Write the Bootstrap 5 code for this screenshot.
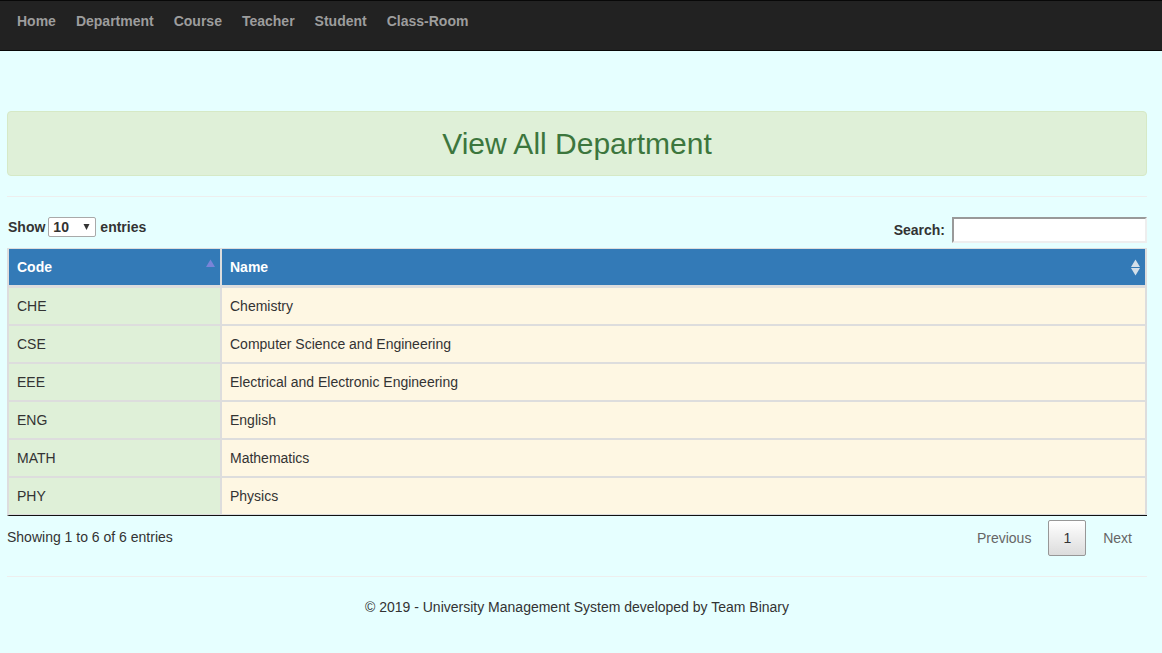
<!DOCTYPE html>
<html lang="en">
<head>
<meta charset="utf-8">
<meta name="viewport" content="width=device-width, initial-scale=1">
<title>View All Department</title>
<link href="https://cdn.jsdelivr.net/npm/bootstrap@5.3.0/dist/css/bootstrap.min.css" rel="stylesheet">
<style>
  body { background: #e6ffff; color: #333; font-family: "Liberation Sans", Arial, sans-serif; font-size: 14px; line-height: 20px; }
  .topbar { background: #222; border: solid #080808; border-width: 1px 0; min-height: 51px; padding: 0 7px; --bs-navbar-nav-link-padding-x: 10px; }
  .topbar .nav-link { color: #9d9d9d; font-weight: 700; padding: 10px; }
  .topbar .nav-link:hover { color: #fff; }
  .page-body { padding: 60px 15px 0 7px; }
  .title-box { background: #dff0d8; border-color: #d6e9c6; color: #3c763d; padding: 15px; margin: 0; border-radius: 4px; text-align: center; }
  .title-box h1 { font-size: 30px; line-height: 33px; font-weight: 400; margin: 0; }
  .rule { border: 0; border-top: 1px solid #eee; opacity: 1; margin: 20px 0; }
  .length-label { font-weight: 700; padding-left: 1px; }
  .length-picker { position: relative; display: inline-block; margin: 0 4px 0 3px; }
  .length-picker select { display: block; appearance: none; width: 48px; height: 20px; padding: 0 4px; border: 1px solid #a9a9a9; border-radius: 2px; background: #fff; color: #333; font-weight: 700; line-height: 18px; }
  .length-picker svg { position: absolute; right: 6px; top: 7px; pointer-events: none; }
  .search-label { font-weight: 700; }
  .search-label input { width: 195px; height: 26px; border: 2px solid; border-color: #999 #eee #eee #999; background: #fff; margin-left: 7px; padding: 1px 2px; }
  .dept-table { width: 100%; margin-top: 5px; table-layout: fixed; border-collapse: separate; border-spacing: 0; border: solid #ddd; border-width: 1px 0 1px 2px; border-bottom-color: #111; }
  .dept-table .code-col { width: 213px; }
  .dept-table th, .dept-table td { padding: 8px; border: solid #ddd; border-width: 0 2px 2px 0; background-clip: padding-box; }
  .dept-table th { background-color: #337ab7; color: #fff; border-bottom-width: 3px; padding-right: 5px; }
  .dept-table td:first-child { background-color: #dff0d8; }
  .dept-table td:last-child { background-color: #fef7e3; }
  .dept-table tbody tr:last-child td { border-bottom-width: 1px; }
  .table-info-text { padding-top: 11px; }
  .pager { gap: 2px; padding-top: 4px; }
  .pager button { border: 1px solid transparent; border-radius: 2px; background: none; color: #666; padding: 7px 14px; }
  .pager button.current { border-color: #979797; color: #333; background: linear-gradient(#fff, #dcdcdc); }
</style>
</head>
<body>
<nav class="navbar navbar-expand topbar align-items-start">
  <ul class="navbar-nav">
    <li class="nav-item"><a class="nav-link" href="#">Home</a></li>
    <li class="nav-item"><a class="nav-link" href="#">Department</a></li>
    <li class="nav-item"><a class="nav-link" href="#">Course</a></li>
    <li class="nav-item"><a class="nav-link" href="#">Teacher</a></li>
    <li class="nav-item"><a class="nav-link" href="#">Student</a></li>
    <li class="nav-item"><a class="nav-link" href="#">Class-Room</a></li>
  </ul>
</nav>

<div class="container-fluid page-body">
  <main>
    <div class="alert title-box"><h1>View All Department</h1></div>
    <hr class="rule">

    <div class="d-flex flex-wrap justify-content-between align-items-start">
      <label class="length-label d-flex align-items-center" for="length">Show
        <span class="length-picker">
          <select id="length"><option>10</option><option>25</option><option>50</option><option>100</option></select>
          <svg width="7" height="6" viewBox="0 0 7 6" aria-hidden="true"><path d="M.5 0h6l-3 6z" fill="#333"/></svg>
        </span>
        entries</label>
      <label class="search-label d-flex align-items-center" for="search">Search:<input type="search" id="search"></label>
    </div>

    <table class="dept-table">
      <colgroup><col class="code-col"><col></colgroup>
      <thead>
        <tr>
          <th scope="col"><div class="d-flex justify-content-between">Code
            <svg width="9" height="20" viewBox="0 0 9 20" aria-hidden="true"><path d="M4.500 2.500L9 10H0z" fill="#7984d8"/></svg></div></th>
          <th scope="col"><div class="d-flex justify-content-between">Name
            <svg width="9" height="20" viewBox="0 0 9 20" aria-hidden="true"><path d="M4.500 2.500L9 10H0zM0 11h9l-4.500 7.500z" fill="#d3dfe9"/></svg></div></th>
        </tr>
      </thead>
      <tbody>
        <tr><td>CHE</td><td>Chemistry</td></tr>
        <tr><td>CSE</td><td>Computer Science and Engineering</td></tr>
        <tr><td>EEE</td><td>Electrical and Electronic Engineering</td></tr>
        <tr><td>ENG</td><td>English</td></tr>
        <tr><td>MATH</td><td>Mathematics</td></tr>
        <tr><td>PHY</td><td>Physics</td></tr>
      </tbody>
    </table>

    <div class="d-flex flex-wrap justify-content-between align-items-start">
      <div class="table-info-text" role="status">Showing 1 to 6 of 6 entries</div>
      <div class="pager d-flex">
        <button type="button">Previous</button>
        <button type="button" class="current">1</button>
        <button type="button">Next</button>
      </div>
    </div>
  </main>
  <hr class="rule">
  <footer class="text-center">© 2019 - University Management System developed by Team Binary</footer>
</div>
<script src="https://cdn.jsdelivr.net/npm/bootstrap@5.3.0/dist/js/bootstrap.bundle.min.js"></script>
</body>
</html>
